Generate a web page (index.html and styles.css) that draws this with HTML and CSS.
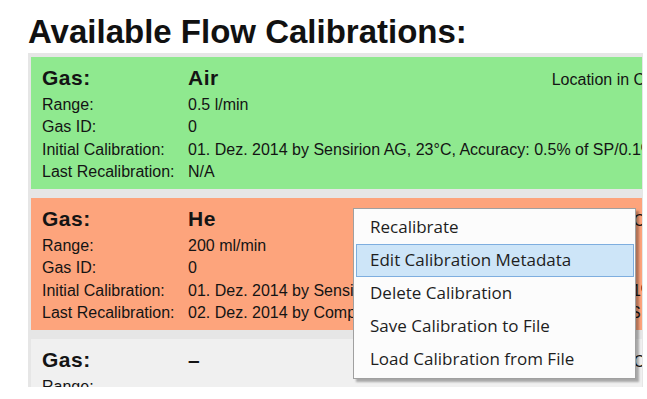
FILE: index.html
```html
<!DOCTYPE html>
<html>
<head>
<meta charset="utf-8">
<link rel="stylesheet" href="styles.css">
</head>
<body>
<h1 class="title">Available Flow Calibrations:</h1>
<div class="list">
  <div class="cal cal-ok">
    <div class="row head"><span class="lbl">Gas:</span><span class="val">Air</span><span class="loc">Location in Chip: 1</span></div>
    <div class="row"><span class="lbl">Range:</span><span class="val">0.5 l/min</span></div>
    <div class="row"><span class="lbl">Gas ID:</span><span class="val">0</span></div>
    <div class="row"><span class="lbl">Initial Calibration:</span><span class="val">01. Dez. 2014 by Sensirion AG, 23°C, Accuracy: 0.5% of SP/0.1% of FS</span></div>
    <div class="row"><span class="lbl">Last Recalibration:</span><span class="val">N/A</span></div>
  </div>
  <div class="cal cal-recal">
    <div class="row head"><span class="lbl">Gas:</span><span class="val">He</span><span class="loc">Location in Chip: 2</span></div>
    <div class="row"><span class="lbl">Range:</span><span class="val">200 ml/min</span></div>
    <div class="row"><span class="lbl">Gas ID:</span><span class="val">0</span></div>
    <div class="row"><span class="lbl">Initial Calibration:</span><span class="val">01. Dez. 2014 by Sensirion AG, 23°C, Accuracy: 0.5% of SP/0.1% of FS</span></div>
    <div class="row"><span class="lbl">Last Recalibration:</span><span class="val">02. Dez. 2014 by Company, 22°C, Accuracy: 1% SP/0.2% of FS</span></div>
  </div>
  <div class="cal cal-empty">
    <div class="row head"><span class="lbl">Gas:</span><span class="val">–</span><span class="loc">Location in Chip: 3</span></div>
    <div class="row"><span class="lbl">Range:</span><span class="val">–</span></div>
    <div class="row"><span class="lbl">Gas ID:</span><span class="val">–</span></div>
  </div>
</div>
<div class="menu">
  <div class="item">Recalibrate</div>
  <div class="item item-hover">Edit Calibration Metadata</div>
  <div class="item">Delete Calibration</div>
  <div class="item">Save Calibration to File</div>
  <div class="item">Load Calibration from File</div>
</div>
</body>
</html>
```
FILE: styles.css
```css
html, body {
  margin: 0;
  padding: 0;
  background: #ffffff;
}
body {
  width: 647px;
  height: 399px;
  overflow: hidden;
  font-family: "Liberation Sans", Arial, sans-serif;
  color: #141414;
}
.title {
  margin: 0 0 5px 0;
  padding: 15px 0 0 28px;
  font: bold 33px/33px "Liberation Sans", Arial, sans-serif;
  color: #111;
  height: 33px;
}
.list {
  margin-left: 28px;
  width: 615px;
  height: 334px;
  box-sizing: border-box;
  padding: 4px 0 0 3px;
  background: #e6e6e6;
  overflow: hidden;
  display: flex;
  flex-direction: column;
  gap: 9px;
}
.cal {
  flex: none;
  width: 611px;
  height: 132px;
  box-sizing: border-box;
  padding: 5px 0 0 11px;
  overflow: hidden;
  white-space: nowrap;
}
.cal-ok { background: #8fe98f; }
.cal-recal { background: #fda47c; }
.cal-empty { background: #f0f0f0; }
.row {
  display: flex;
  align-items: baseline;
  font-size: 16px;
  line-height: 22.3px;
}
.lbl {
  flex: none;
  width: 146px;
}
.head {
  height: 32px;
  line-height: 32px;
  font-size: 21px;
  font-weight: bold;
  letter-spacing: 0.5px;
}
.head .val {
  flex: none;
  width: 363.7px;
}
.loc {
  font-size: 16px;
  font-weight: normal;
  letter-spacing: 0;
}
.menu {
  position: absolute;
  left: 353px;
  top: 208px;
  width: 283px;
  height: 171px;
  box-sizing: border-box;
  padding: 2px 1px 2px 2px;
  border: 1px solid #a0a0a0;
  background: #fcfcfc;
  box-shadow: 3px 3px 2px rgba(0, 0, 0, 0.3);
  font-family: "Open Sans", "Noto Sans", sans-serif;
  font-size: 17px;
  color: #1e1e1e;
}
.item {
  height: 33px;
  box-sizing: border-box;
  border: 1px solid transparent;
  padding: 0 0 2px 13px;
  line-height: 29px;
  white-space: nowrap;
}
.item-hover {
  background: #cde5f8;
  border-color: #7eaedf;
}
```
